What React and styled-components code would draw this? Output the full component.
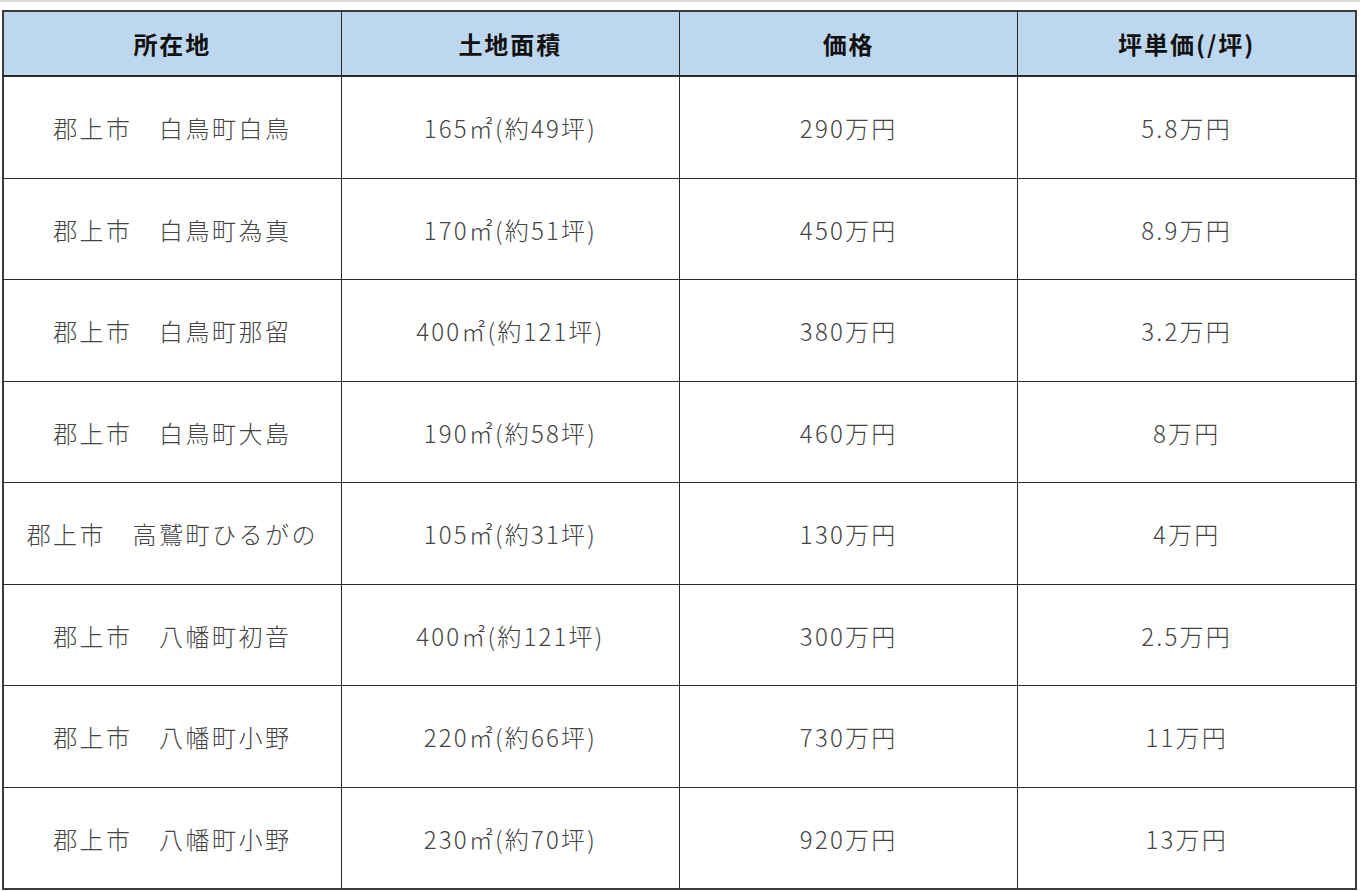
import React from 'react';
import styled, { createGlobalStyle } from 'styled-components';

const GlobalStyle = createGlobalStyle`
	html, body {
		margin: 0;
		padding: 0;
		background: #ffffff;
	}
	body {
		font-family: 'Noto Sans CJK JP', 'Noto Sans', sans-serif;
	}
`;

const Page = styled.div`
	border-top: 2px solid #dcdcdc;
	padding: 8px 3px 0 2px;
`;

const PriceTable = styled.table`
	width: 100%;
	table-layout: fixed;
	border-collapse: collapse;
	border: 2px solid #3c3c3c;
`;

const HeadCell = styled.th`
	height: 63px;
	padding: 0;
	background-color: #bdd7ee;
	border: 1px solid #2a2a2a;
	border-bottom-width: 2px;
	color: #111111;
	font-size: 24px;
	font-weight: 700;
	letter-spacing: 2px;
	text-align: center;
	vertical-align: middle;
`;

const Cell = styled.td`
	height: ${(p) => p.$h}px;
	padding: 0;
	border: 1px solid #2a2a2a;
	color: #444444;
	font-size: 24px;
	font-weight: 300;
	letter-spacing: ${(p) => (p.$wide ? 2.5 : 2.2)}px;
	text-align: center;
	vertical-align: middle;
	white-space: nowrap;
`;

const headers = ['所在地', '土地面積', '価格', '坪単価(/坪)'];

const rows = [
	['郡上市　白鳥町白鳥', '165㎡(約49坪)', '290万円', '5.8万円'],
	['郡上市　白鳥町為真', '170㎡(約51坪)', '450万円', '8.9万円'],
	['郡上市　白鳥町那留', '400㎡(約121坪)', '380万円', '3.2万円'],
	['郡上市　白鳥町大島', '190㎡(約58坪)', '460万円', '8万円'],
	['郡上市　高鷲町ひるがの', '105㎡(約31坪)', '130万円', '4万円'],
	['郡上市　八幡町初音', '400㎡(約121坪)', '300万円', '2.5万円'],
	['郡上市　八幡町小野', '220㎡(約66坪)', '730万円', '11万円'],
	['郡上市　八幡町小野', '230㎡(約70坪)', '920万円', '13万円'],
];

const App = () => {
	return (
		<Page>
			<GlobalStyle />
			<PriceTable>
				<thead>
					<tr>
						{headers.map((h) => (
							<HeadCell key={h}>{h}</HeadCell>
						))}
					</tr>
				</thead>
				<tbody>
					{rows.map((row, i) => (
						<tr key={i}>
							{row.map((value, j) => (
								<Cell key={j} $h={i % 2 === 0 ? 101 : 100} $wide={j === 0}>
									{value}
								</Cell>
							))}
						</tr>
					))}
				</tbody>
			</PriceTable>
		</Page>
	);
};

export default App;
